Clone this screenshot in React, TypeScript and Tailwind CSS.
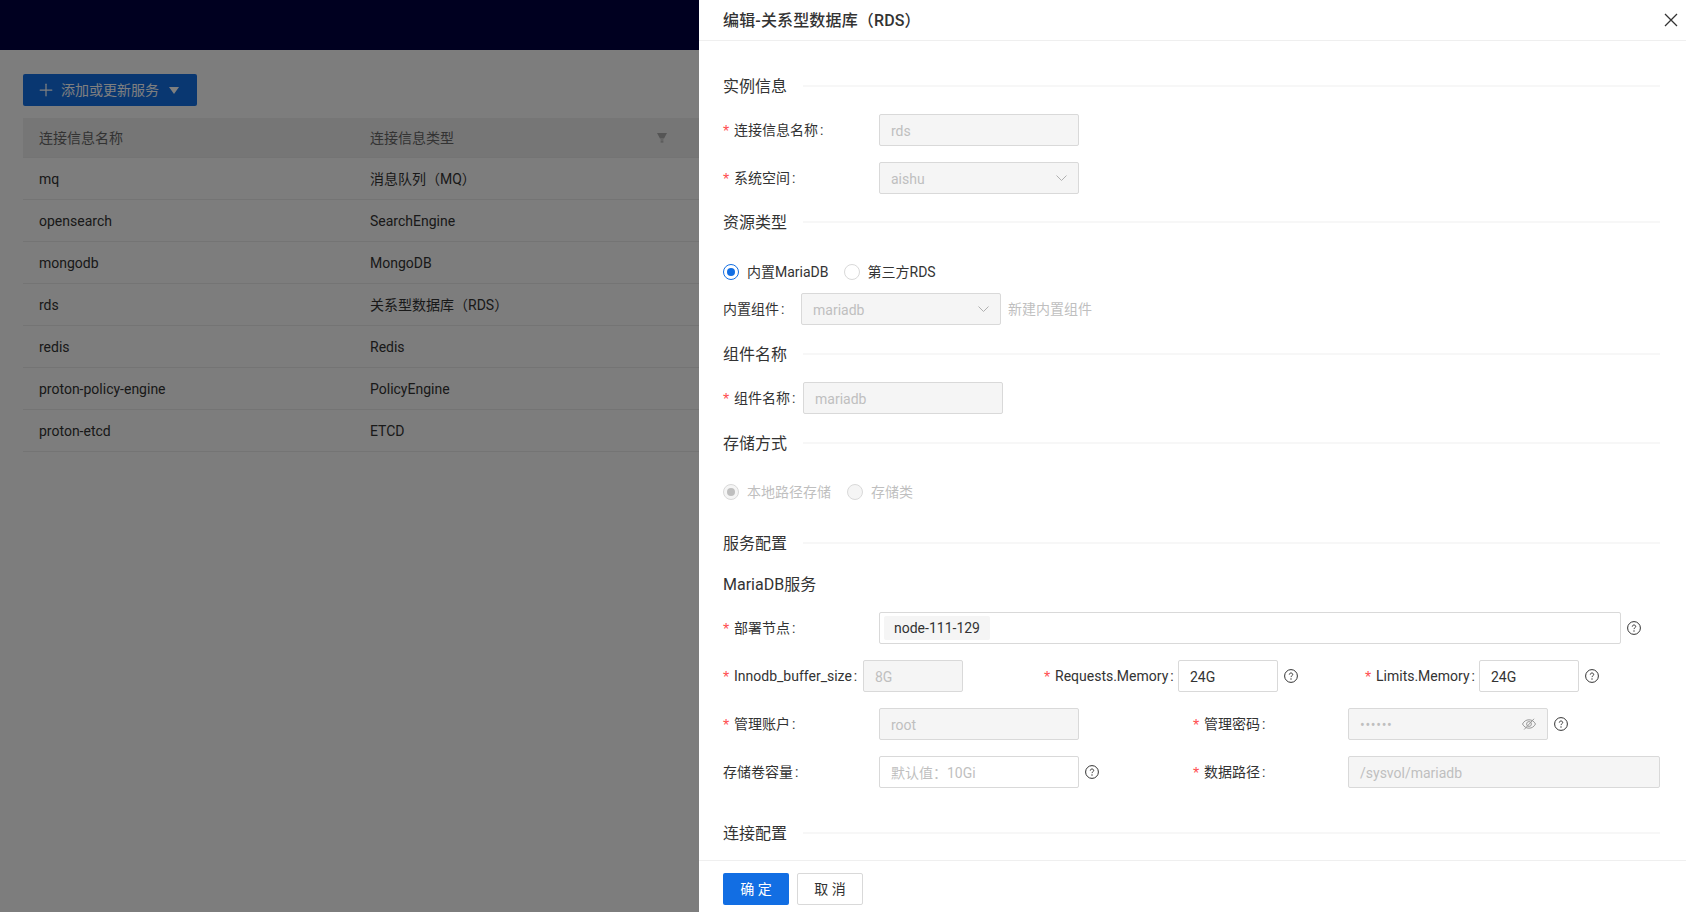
import { ReactNode } from 'react';
import { Plus } from 'lucide-react';

const rows = [
  ['mq', '消息队列（MQ）'],
  ['opensearch', 'SearchEngine'],
  ['mongodb', 'MongoDB'],
  ['rds', '关系型数据库（RDS）'],
  ['redis', 'Redis'],
  ['proton-policy-engine', 'PolicyEngine'],
  ['proton-etcd', 'ETCD'],
];

function Help() {
  return (
    <svg viewBox="0 0 14 14" className="ml-[6px] h-[14px] w-[14px] shrink-0 text-[#333]" fill="none" stroke="currentColor">
      <circle cx="7" cy="7" r="6.4" strokeWidth="1" />
      <path d="M5.3 5.6c0-1 .8-1.6 1.7-1.6s1.7.6 1.7 1.5c0 1.3-1.7 1.3-1.7 2.6" strokeWidth="1" />
      <circle cx="7" cy="10" r=".7" fill="currentColor" stroke="none" />
    </svg>
  );
}

function SectionTitle({ title, className }: { title: string; className: string }) {
  return (
    <div className={`flex h-6 items-center ${className}`}>
      <span className="translate-y-[1px] text-base leading-6 text-[#333]">{title}</span>
      <div className="ml-4 h-[2px] flex-1 bg-[#f7f7f7]"></div>
    </div>
  );
}

function Label({ text, required, className }: { text: string; required?: boolean; className: string }) {
  return (
    <div className={`flex shrink-0 items-center text-sm text-[#333] ${className}`}>
      {required && <span className="w-[11px] shrink-0 translate-y-[2px] font-['Liberation_Sans',sans-serif] text-[16px] text-[#ff4d4f]">*</span>}
      <span>{text}</span>
      <span className="ml-[2px]">:</span>
    </div>
  );
}

function Input({ value, disabled, placeholder, className, children }: { value?: ReactNode; disabled?: boolean; placeholder?: boolean; className: string; children?: ReactNode }) {
  const tone = disabled ? 'bg-[#f5f5f5] text-[#bfbfbf]' : placeholder ? 'bg-white text-[#bfbfbf]' : 'bg-white text-[#333]';
  return (
    <div className={`flex h-8 shrink-0 items-center justify-between rounded-[2px] border border-[#d9d9d9] px-[11px] text-sm ${tone} ${className}`}>
      <span className="pt-[1px]">{value}</span>
      {children}
    </div>
  );
}

function Arrow() {
  return (
    <svg viewBox="0 0 11 6" className="h-[6px] w-[11px] text-[#b0b0b0]" fill="none" stroke="currentColor" strokeWidth="1">
      <path d="M.5.5l5 5 5-5" />
    </svg>
  );
}

function Radio({ label, checked, disabled, className }: { label: string; checked?: boolean; disabled?: boolean; className?: string }) {
  const ring = disabled ? 'border-[#d9d9d9] bg-[#f5f5f5]' : checked ? 'border-[#126ee3] bg-white' : 'border-[#d9d9d9] bg-white';
  const dot = disabled ? 'bg-[#bfbfbf]' : 'bg-[#126ee3]';
  return (
    <div className={`flex items-center text-sm ${disabled ? 'text-[#bfbfbf]' : 'text-[#333]'} ${className ?? ''}`}>
      <span className={`flex h-4 w-4 items-center justify-center rounded-full border ${ring}`}>
        {checked && <span className={`h-2 w-2 rounded-full ${dot}`}></span>}
      </span>
      <span className="ml-2">{label}</span>
    </div>
  );
}

export default function App() {
  return (
    <div className="relative h-[912px] w-full overflow-hidden bg-[#fafafa] font-['Roboto','Noto_Sans_CJK_SC',sans-serif]">
      <div className="h-[50px] bg-[#000040]"></div>

      <div className="px-[23px] pt-6">
        <button className="flex h-8 w-[174px] items-center rounded-[2px] bg-[#126ee3] pl-[13px] text-sm text-white">
          <Plus className="h-5 w-5" strokeWidth={1.5} />
          <span className="ml-[5px]">添加或更新服务</span>
          <svg viewBox="0 0 10 7" className="ml-[10px] h-[7px] w-[10px]" fill="currentColor">
            <path d="M0 0h10L5 7z" />
          </svg>
        </button>

        <div className="mt-3 text-sm">
          <div className="flex h-10 items-center border-b border-[#e8e8e8] bg-[#ececec] text-[#666]">
            <div className="w-[331px] pl-4">连接信息名称</div>
            <div className="flex w-[331px] items-center justify-between pl-4 pr-[17px]">
              <span>连接信息类型</span>
              <svg viewBox="0 0 12 12" className="h-3 w-3 text-[#aaa]" fill="currentColor">
                <path d="M1 1h10L8 6.5H4zM4.6 7.4h2.8v1H4.6zM4.6 9.2h2.8v1.4H4.6z" />
              </svg>
            </div>
          </div>
          {rows.map(([name, type]) => (
            <div key={name} className="flex h-[42px] items-center border-b border-[#e8e8e8] text-[#333]">
              <div className="w-[331px] pl-4">{name}</div>
              <div className="w-[331px] pl-4">{type}</div>
            </div>
          ))}
        </div>
      </div>

      {/* 遮罩 */}
      <div className="absolute inset-0 bg-black/50"></div>

      {/* 抽屉 */}
      <div className="absolute bottom-0 right-0 top-0 flex w-[987px] flex-col bg-white">
        <div className="flex h-[41px] shrink-0 items-center justify-between border-b border-[#efefef] pl-6 pr-[8px]">
          <span className="translate-y-[0.5px] text-base font-medium tracking-[0.15px] text-[#333]">编辑-关系型数据库（RDS）</span>
          <svg viewBox="0 0 14 14" className="h-[14px] w-[14px] text-[#333]" fill="none" stroke="currentColor" strokeWidth="1.3">
            <path d="M1 1l12 12M13 1L1 13" />
          </svg>
        </div>

        <div className="flex-1 overflow-hidden pl-6 pr-[26px] pt-[33px]">
          <SectionTitle title="实例信息" className="" />
          <div className="mt-4 flex">
            <Label text="连接信息名称" required className="w-[156px]" />
            <Input value="rds" disabled className="w-[200px]" />
          </div>
          <div className="mt-4 flex">
            <Label text="系统空间" required className="w-[156px]" />
            <Input value="aishu" disabled className="w-[200px]"><Arrow /></Input>
          </div>

          <SectionTitle title="资源类型" className="mt-4" />
          <div className="mt-[30px] flex h-4 items-center">
            <Radio label="内置MariaDB" checked />
            <Radio label="第三方RDS" className="ml-[15px]" />
          </div>
          <div className="mt-[13px] flex items-center">
            <Label text="内置组件" className="w-[78px]" />
            <Input value="mariadb" disabled className="w-[200px]"><Arrow /></Input>
            <span className="ml-[7px] text-sm text-[#bfbfbf]">新建内置组件</span>
          </div>

          <SectionTitle title="组件名称" className="mt-[17px]" />
          <div className="mt-4 flex">
            <Label text="组件名称" required className="w-20" />
            <Input value="mariadb" disabled className="w-[200px]" />
          </div>

          <SectionTitle title="存储方式" className="mt-[17px]" />
          <div className="mt-[29px] flex h-4 items-center">
            <Radio label="本地路径存储" checked disabled />
            <Radio label="存储类" disabled className="ml-4" />
          </div>

          <SectionTitle title="服务配置" className="mt-[31px]" />
          <div className="mt-[17px] h-6 translate-y-[1px] text-base leading-6 text-[#333]">MariaDB服务</div>

          <div className="mt-4 flex items-center">
            <Label text="部署节点" required className="w-[156px]" />
            <div className="flex h-8 w-[742px] items-center rounded-[2px] border border-[#d9d9d9] bg-white pl-1">
              <span className="flex h-6 w-[106px] items-center justify-center rounded-[2px] bg-[#f5f5f5] text-sm text-[#333]">node-111-129</span>
            </div>
            <Help />
          </div>

          <div className="mt-4 flex items-center">
            <Label text="Innodb_buffer_size" required className="w-[140px]" />
            <Input value="8G" disabled className="w-[100px]" />
            <Label text="Requests.Memory" required className="ml-[81px] w-[134px]" />
            <Input value="24G" className="w-[100px]" />
            <Help />
            <Label text="Limits.Memory" required className="ml-[67px] w-[114px]" />
            <Input value="24G" className="w-[100px]" />
            <Help />
          </div>

          <div className="mt-4 flex items-center">
            <Label text="管理账户" required className="w-[156px]" />
            <Input value="root" disabled className="w-[200px]" />
            <Label text="管理密码" required className="ml-[114px] w-[155px]" />
            <Input value={<span className="tracking-[0.7px]">••••••</span>} disabled className="w-[200px]">
              <svg viewBox="0 0 16 16" className="-mr-[1px] h-4 w-4 text-[#999]" fill="none" stroke="currentColor" strokeWidth="1">
                <path d="M1.5 8C3 5.2 5.2 3.8 8 3.8S13 5.2 14.5 8C13 10.8 10.8 12.2 8 12.2S3 10.8 1.5 8z" />
                <circle cx="8" cy="8" r="2.4" />
                <path d="M3.2 13.5 13 2.8" />
              </svg>
            </Input>
            <Help />
          </div>

          <div className="mt-4 flex items-center">
            <Label text="存储卷容量" className="w-[156px]" />
            <Input value="默认值：10Gi" placeholder className="w-[200px]" />
            <Help />
            <Label text="数据路径" required className="ml-[94px] w-[155px]" />
            <Input value="/sysvol/mariadb" disabled className="w-[312px]" />
          </div>

          <SectionTitle title="连接配置" className="mt-[33px]" />
        </div>

        <div className="flex h-[52px] shrink-0 gap-2 border-t border-[#efefef] pl-6 pt-3">
          <button className="h-8 w-[66px] rounded-[2px] bg-[#126ee3] text-sm text-white">确 定</button>
          <button className="h-8 w-[66px] rounded-[2px] border border-[#d9d9d9] bg-white text-sm text-[#333]">取 消</button>
        </div>
      </div>
    </div>
  );
}
